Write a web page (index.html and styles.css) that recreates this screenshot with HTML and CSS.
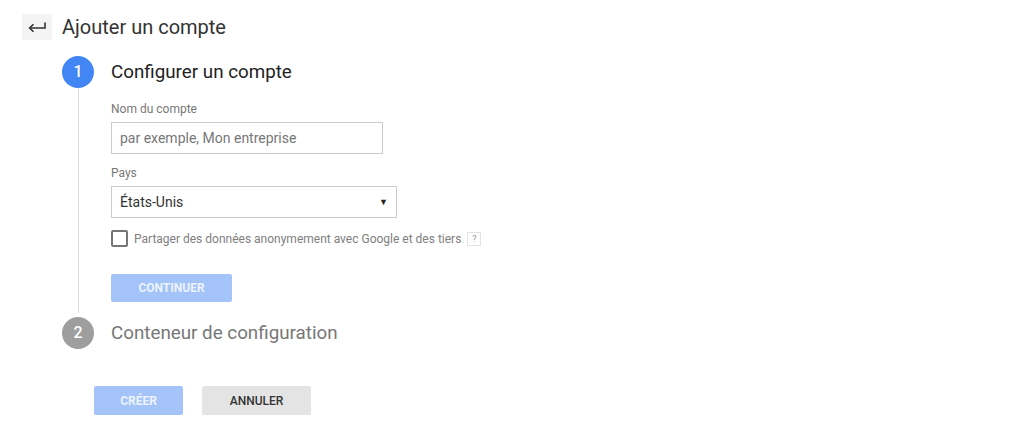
FILE: index.html
```html
<!DOCTYPE html>
<html lang="fr">
<head>
<meta charset="utf-8">
<title>Ajouter un compte</title>
<link rel="stylesheet" href="styles.css">
</head>
<body>
<div class="page">
  <div class="header">
    <button class="back" aria-label="Retour">
      <svg width="20" height="12" viewBox="0 0 20 12"><path d="M18 1.5v5.5H3" fill="none" stroke="#333" stroke-width="1.6"/><path d="M6.5 3.2L2.6 7l3.9 3.8" fill="none" stroke="#333" stroke-width="1.6"/></svg>
    </button>
    <h1 class="title">Ajouter un compte</h1>
  </div>

  <div class="steps">
    <div class="step step-active">
      <div class="indicator">
        <div class="circle circle-blue">1</div>
        <div class="line"></div>
      </div>
      <div class="step-body">
        <div class="step-title">Configurer un compte</div>
        <div class="field">
          <label class="label">Nom du compte</label>
          <div class="input">par exemple, Mon entreprise</div>
        </div>
        <div class="field">
          <label class="label">Pays</label>
          <div class="select"><span>États-Unis</span><span class="caret">▼</span></div>
        </div>
        <div class="check-row">
          <span class="checkbox"></span>
          <span class="check-text">Partager des données anonymement avec Google et des tiers</span>
          <span class="help">?</span>
        </div>
        <button class="btn btn-primary btn-continue">CONTINUER</button>
      </div>
    </div>

    <div class="step">
      <div class="indicator">
        <div class="circle circle-grey">2</div>
      </div>
      <div class="step-body">
        <div class="step-title step-title-muted">Conteneur de configuration</div>
      </div>
    </div>
  </div>

  <div class="actions">
    <button class="btn btn-primary btn-create">CRÉER</button>
    <button class="btn btn-cancel">ANNULER</button>
  </div>
</div>
</body>
</html>
```
FILE: styles.css
```css
html, body {
  margin: 0;
  padding: 0;
  background: #ffffff;
  font-family: Roboto, "Liberation Sans", Arial, sans-serif;
  color: #333;
}

.page {
  padding: 14px 0 0 22px;
}

.header {
  display: flex;
  align-items: center;
  gap: 10px;
  height: 26px;
}

.back {
  width: 30px;
  height: 26px;
  border: none;
  background: #f4f4f4;
  padding: 0;
  display: flex;
  align-items: center;
  justify-content: center;
}

.title {
  margin: 0;
  font-size: 20px;
  font-weight: 400;
  color: #333;
  line-height: 26px;
}

.steps {
  margin: 16px 0 0 40px;
}

.step {
  display: flex;
}

.indicator {
  width: 32px;
  display: flex;
  flex-direction: column;
  align-items: center;
}

.circle {
  width: 32px;
  height: 32px;
  border-radius: 50%;
  color: #fff;
  font-size: 16px;
  font-weight: 500;
  line-height: 32px;
  text-align: center;
  flex: none;
}

.circle-blue { background: #4285f4; }
.circle-grey { background: #9e9e9e; }

.line {
  width: 1px;
  flex: 1;
  background: #dcdcdc;
  margin-bottom: 4px;
}

.step-body {
  margin-left: 17px;
}

.step-active .step-body {
  padding-bottom: 15px;
}

.step-title {
  font-size: 18.8px;
  line-height: 32px;
  color: #222;
}

.step-title-muted {
  color: #777;
}

.field {
  display: flex;
  flex-direction: column;
}

.label {
  font-size: 12px;
  line-height: 14px;
  color: #777;
  margin-top: 14px;
  margin-bottom: 6px;
}

.field + .field .label {
  margin-top: 12px;
}

.input {
  width: 262px;
  height: 30px;
  border: 1px solid #ccc;
  font-size: 14px;
  line-height: 30px;
  color: #777;
  padding-left: 8px;
}

.select {
  width: 268px;
  height: 30px;
  border: 1px solid #ccc;
  font-size: 14px;
  line-height: 30px;
  color: #333;
  padding: 0 8px 0 8px;
  display: flex;
  justify-content: space-between;
  align-items: center;
}

.caret {
  font-size: 9px;
  color: #222;
}

.check-row {
  display: flex;
  align-items: center;
  margin-top: 12px;
  height: 17px;
}

.checkbox {
  width: 13px;
  height: 13px;
  border: 2px solid #757575;
  border-radius: 2px;
  margin-right: 6px;
}

.check-text {
  font-size: 12px;
  color: #808080;
}

.help {
  margin-left: 6px;
  width: 12px;
  height: 12px;
  border: 1px solid #e4e4e4;
  font-size: 9px;
  line-height: 12px;
  text-align: center;
  color: #999;
}

.btn {
  border: none;
  font-family: Roboto, "Liberation Sans", Arial, sans-serif;
  font-size: 12px;
  font-weight: 700;
  padding: 0;
  border-radius: 2px;
}

.btn-primary {
  background: #a3c3f9;
  color: #edf3fe;
}

.btn-continue {
  width: 121px;
  height: 28px;
  margin-top: 27px;
}

.actions {
  display: flex;
  gap: 19px;
  margin: 37px 0 0 72px;
}

.btn-create {
  width: 89px;
  height: 29px;
}

.btn-cancel {
  width: 109px;
  height: 29px;
  background: #e4e4e4;
  color: #333;
  font-weight: 500;
  box-shadow: 0 1px 1px rgba(0,0,0,0.06);
}
```
